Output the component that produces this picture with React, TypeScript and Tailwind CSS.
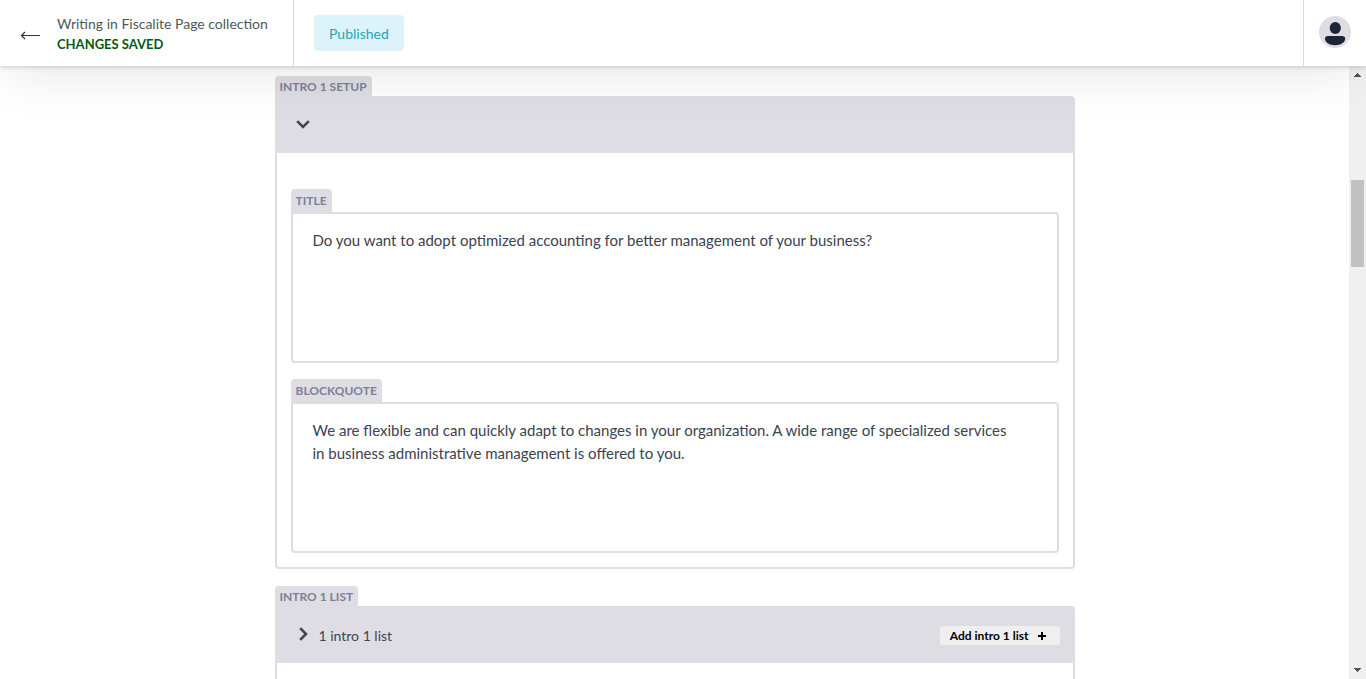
import { useId } from "react";
import type { ReactNode } from "react";

function Tab({ children }: { children: ReactNode }) {
  return (
    <h2 className="h-5 w-fit rounded-t bg-[#dedde3] px-[5px] text-[12px] leading-[22px] font-bold whitespace-nowrap text-[#7d8096] uppercase">
      {children}
    </h2>
  );
}

function Field({ label, value }: { label: string; value: string }) {
  const id = useId();
  return (
    <div className="flex flex-col items-start">
      <label
        htmlFor={id}
        className="h-[23px] rounded-t bg-[#dedde3] px-[5px] text-[12px] leading-6 font-bold text-[#7d8096] uppercase"
      >
        {label}
      </label>
      <textarea
        id={id}
        defaultValue={value}
        className="h-[151px] w-full resize-none rounded rounded-tl-none border-2 border-[#dedde3] bg-white py-[15px] pr-10 pl-5 text-[15px] leading-[23px] text-[#3b4252] outline-none"
      />
    </div>
  );
}

function Section({ title, header, children }: { title: string; header: ReactNode; children?: ReactNode }) {
  return (
    <section>
      <Tab>{title}</Tab>
      <div className="rounded rounded-tl-none border-2 border-[#dedde3] bg-white">
        <div className="flex h-[55px] items-center justify-between bg-[#dedde3] pr-[13px] pb-1 pl-[18px]">{header}</div>
        <div className="flex min-h-24 flex-col gap-4 px-[14px] pt-9 pb-[14px]">{children}</div>
      </div>
    </section>
  );
}

function Chevron({ open }: { open: boolean }) {
  return (
    <svg width="16" height="16" viewBox="0 0 16 16" fill="none" stroke="#3f4554" strokeWidth="2.6">
      <path d={open ? "M2.2 5.2 8 11l5.8-5.8" : "M5.2 2.2 11 8l-5.8 5.8"} />
    </svg>
  );
}

export default function App() {
  return (
    <div className="flex h-screen flex-col overflow-hidden bg-white font-['Lato','Liberation_Sans',sans-serif]">
      <header className="relative z-10 flex h-[66px] shrink-0 items-stretch bg-white shadow-[0_1px_5px_rgba(33,53,54,0.22),0_16px_50px_-8px_rgba(0,0,0,0.1)]">
        <div className="flex min-w-[294px] items-center border-r border-[#d9dbdd] px-5">
          <a href="#collection" aria-label="Back" className="mt-1">
            <svg width="21" height="10" viewBox="0 0 21 10" fill="none" stroke="#2c3333" strokeWidth="1.2">
              <path d="M20 5.5H1.5M5 2 1.5 5.5 5 9" />
            </svg>
          </a>
          <div className="ml-4 text-[14px] leading-5">
            <p className="mt-[2px] text-[#4f5858]">Writing in Fiscalite Page collection</p>
            <p className="text-[13px] font-bold text-[#005c13]">CHANGES SAVED</p>
          </div>
        </div>
        <div className="flex flex-1 items-center pl-5">
          <button className="h-9 rounded bg-[#dcf4f9] px-[15px] text-[14px] text-[#1fa5b9]">Published</button>
        </div>
        <div className="flex items-center border-l border-[#d9dbdd] px-[15px]">
          <button aria-label="Account" className="-mt-[2px]">
            <svg width="32" height="32" viewBox="0 0 32 32">
              <circle cx="16" cy="16" r="16" fill="#dedde3" />
              <ellipse cx="16.3" cy="12" rx="5.6" ry="6" fill="#1c2536" />
              <path d="M9 20h14c2 0 3.2 1 3.2 2.5 0 4-4.7 6.7-10.2 6.7S6 26.5 6 22.5C6 21 7.2 20 9 20Z" fill="#1c2536" />
            </svg>
          </button>
        </div>
      </header>
      <div className="flex min-h-0 flex-1">
        <main className="min-w-0 flex-1 overflow-hidden pt-[10px]">
          <div className="mx-auto flex max-w-[800px] flex-col gap-[17px]">
            <Section
              title="Intro 1 setup"
              header={
                <button aria-label="Collapse intro 1 setup">
                  <Chevron open />
                </button>
              }
            >
              <Field label="Title" value="Do you want to adopt optimized accounting for better management of your business?" />
              <Field
                label="Blockquote"
                value="We are flexible and can quickly adapt to changes in your organization. A wide range of specialized services in business administrative management is offered to you."
              />
            </Section>
            <Section
              title="Intro 1 list"
              header={
                <>
                  <button className="flex items-center gap-2 text-[14px] text-[#3f4554]">
                    <Chevron open={false} />
                    <span className="pt-1">1 intro 1 list</span>
                  </button>
                  <button className="mt-1 flex h-[19px] items-center gap-2 rounded-[3px] bg-[#efefef] pr-[13px] pl-[10px] text-[12px] font-bold text-black">
                    Add intro 1 list
                    <svg width="10" height="10" viewBox="0 0 10 10" stroke="#000" strokeWidth="2">
                      <path d="M5 1v8M1 5h8" />
                    </svg>
                  </button>
                </>
              }
            />
          </div>
        </main>
        <div aria-hidden="true" className="flex w-[17px] shrink-0 flex-col items-center bg-[#f0f0f0] py-[7px]">
          <svg width="7" height="4" viewBox="0 0 7 4" fill="#505050" shapeRendering="crispEdges">
            <path d="M3 0h1v1h1v1h1v1h1v1H0V3h1V2h1V1h1Z" />
          </svg>
          <div className="mt-[103px] h-[87px] w-[13px] bg-[#c1c1c1]" />
          <svg className="mt-auto" width="7" height="4" viewBox="0 0 7 4" fill="#505050" shapeRendering="crispEdges">
            <path d="M0 0h7v1H6v1H5v1H4v1H3V3H2V2H1V1H0Z" />
          </svg>
        </div>
      </div>
    </div>
  );
}
